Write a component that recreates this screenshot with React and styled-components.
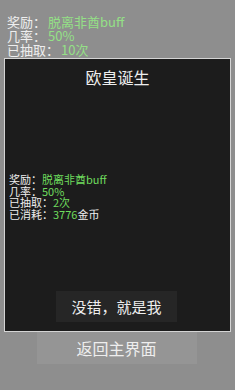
import React from "react";
import styled, { createGlobalStyle } from "styled-components";

const Global = createGlobalStyle`
  html, body { margin: 0; padding: 0; }
  body { background: #8e8e8e; font-family: "Noto Sans CJK SC", "Noto Sans", sans-serif; }
`;

const Page = styled.div`
  position: relative;
  width: 235px;
  height: 390px;
  overflow: hidden;
  background: #8e8e8e;
  display: flex;
  flex-direction: column;
`;

const Stats = styled.div`
  padding: ${(p) => p.$pad};
  font-size: ${(p) => p.$size}px;
  line-height: ${(p) => p.$lh}px;
  color: #eeeeee;
  white-space: nowrap;
`;

const Line = styled.div`
  display: flex;
  height: ${(p) => p.$h}px;
  overflow: visible;
`;

const Label = styled.span`
  display: inline-block;
  height: 100%;
`;

const Value = styled.span`
  display: inline-block;
  height: 100%;
  margin-left: ${(p) => p.$gap || 0}px;
  color: ${(p) => p.$color};
`;

const Spacer = styled.div`
  flex: 1;
`;

const MenuButton = styled.div`
  align-self: center;
  width: 160px;
  height: 32px;
  margin-bottom: 26px;
  margin-left: -2px;
  background: #959595;
  color: #eeeeee;
  font-size: 16px;
  display: flex;
  align-items: center;
  justify-content: center;
`;

const Modal = styled.div`
  position: absolute;
  left: 4px;
  top: 58px;
  width: 225px;
  height: 272px;
  background: #1c1c1c;
  border: 1px solid #d4d4d4;
  display: flex;
  flex-direction: column;
`;

const Title = styled.div`
  margin-top: 7px;
  text-align: center;
  font-size: 16px;
  line-height: 22px;
  color: #eeeeee;
`;

const ModalStats = styled(Stats)`
  margin-top: 86px;
`;

const ConfirmButton = styled.div`
  align-self: center;
  margin-left: -2px;
  width: 121px;
  height: 31px;
  margin-bottom: 9px;
  background: #262626;
  color: #eeeeee;
  font-size: 15px;
  display: flex;
  align-items: center;
  justify-content: center;
`;

const top = [
  ["奖励：", "脱离非酋buff"],
  ["几率：", "50%"],
  ["已抽取：", "10次"],
];

const inner = [
  ["奖励：", "脱离非酋buff", ""],
  ["几率：", "50%", ""],
  ["已抽取：", "2次", ""],
  ["已消耗：", "3776", "金币"],
];

export default function App() {
  return (
    <Page>
      <Global />
      <Stats $pad="15px 0 0 7px" $size={13} $lh={14}>
        {top.map(([l, v]) => (
          <Line key={l} $h={14}>
            <Label>{l}</Label>
            <Value $gap={2} $color="#94e086">{v}</Value>
          </Line>
        ))}
      </Stats>
      <Spacer />
      <MenuButton>返回主界面</MenuButton>
      <Modal>
        <Title>欧皇诞生</Title>
        <ModalStats $pad="0 0 0 4px" $size={11} $lh={11.5}>
          {inner.map(([l, v, s]) => (
            <Line key={l} $h={11.5}>
              <Label>{l}</Label>
              <Value $color="#6fdc5e">{v}</Value>
              {s && <Label>{s}</Label>}
            </Line>
          ))}
        </ModalStats>
        <Spacer />
        <ConfirmButton>没错，就是我</ConfirmButton>
      </Modal>
    </Page>
  );
}
